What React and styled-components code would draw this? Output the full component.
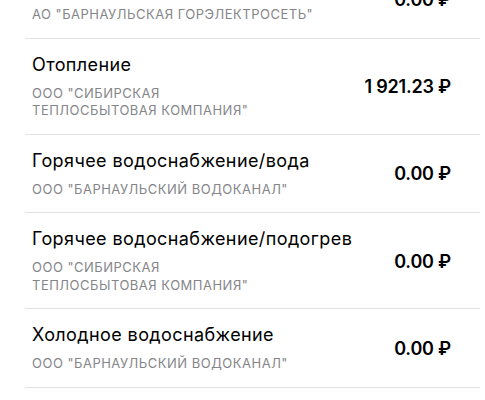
import React, { useLayoutEffect, useRef } from 'react';
import styled, { createGlobalStyle } from 'styled-components';

const GlobalStyle = createGlobalStyle`
  html, body {
    margin: 0;
    padding: 0;
    background: #ffffff;
  }
  body {
    font-family: Inter, "Noto Sans", "DejaVu Sans", sans-serif;
    -webkit-font-smoothing: antialiased;
  }
`;

const Screen = styled.div`
  height: 100vh;
  overflow: hidden;
  background: #ffffff;
`;

const List = styled.ul`
  list-style: none;
  margin: 0;
  padding: 0 5px 0 25px;
`;

const Row = styled.li`
  display: flex;
  align-items: center;
  justify-content: space-between;
  gap: 16px;
  padding: 15px 29px 14px 7px;
  border-bottom: 1px solid #e2e2e4;
`;

const Info = styled.div`
  display: flex;
  flex-direction: column;
  gap: 9px;
  min-width: 0;
`;

const Title = styled.div`
  font-size: 18px;
  line-height: 22px;
  color: #000000;
  letter-spacing: 0.4px;
`;

const Provider = styled.div`
  font-size: 13px;
  line-height: 17.5px;
  color: #858589;
  letter-spacing: 0.5px;
  text-transform: uppercase;
  max-width: ${(p) => p.maxWidth || 'none'};
`;

const Amount = styled.div`
  font-size: 18px;
  font-weight: 600;
  color: #000000;
  letter-spacing: -0.2px;
  white-space: nowrap;
`;

const services = [
  {
    id: 'power',
    title: 'Электроснабжение',
    provider: 'АО "Барнаульская горэлектросеть"',
    amount: '0.00',
  },
  {
    id: 'heating',
    title: 'Отопление',
    provider: 'ООО "Сибирская теплосбытовая компания"',
    amount: '1 921.23',
    wrap: '240px',
  },
  {
    id: 'hot-water',
    title: 'Горячее водоснабжение/вода',
    provider: 'ООО "Барнаульский водоканал"',
    amount: '0.00',
  },
  {
    id: 'hot-heat',
    title: 'Горячее водоснабжение/подогрев',
    provider: 'ООО "Сибирская теплосбытовая компания"',
    amount: '0.00',
    wrap: '240px',
  },
  {
    id: 'cold-water',
    title: 'Холодное водоснабжение',
    provider: 'ООО "Барнаульский водоканал"',
    amount: '0.00',
  },
  {
    id: 'sewage',
    title: 'Водоотведение',
    provider: 'ООО "Барнаульский водоканал"',
    amount: '0.00',
  },
];

const App = () => {
  const screenRef = useRef(null);

  // the list is shown scrolled a little past its first entry
  useLayoutEffect(() => {
    if (screenRef.current) screenRef.current.scrollTop = 40;
  }, []);

  return (
    <>
      <GlobalStyle />
      <Screen ref={screenRef}>
        <List>
          {services.map((s) => (
            <Row key={s.id}>
              <Info>
                <Title>{s.title}</Title>
                <Provider maxWidth={s.wrap}>{s.provider}</Provider>
              </Info>
              <Amount>{s.amount} ₽</Amount>
            </Row>
          ))}
        </List>
      </Screen>
    </>
  );
};

export default App;
